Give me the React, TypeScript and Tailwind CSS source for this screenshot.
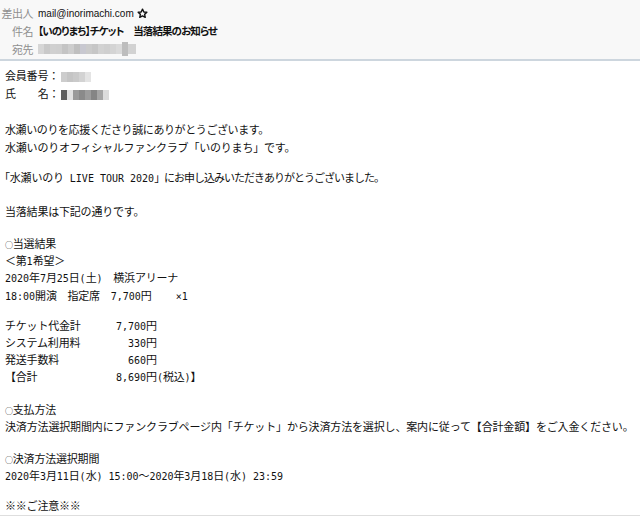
import React from 'react';

const M: React.FC<{ children: React.ReactNode }> = ({ children }) => (
  <span className="font-['DejaVu_Sans_Mono','Liberation_Mono',monospace] text-[10px] tracking-normal whitespace-pre">{children}</span>
);

const Line: React.FC<{ className?: string; children?: React.ReactNode }> = ({ className = '', children }) => (
  <div className={`h-[17px] leading-[17px] whitespace-nowrap ${className}`}>{children}</div>
);

const Mosaic: React.FC<{ cells: string[]; className?: string }> = ({ cells, className = '' }) => (
  <span className={`inline-flex align-middle ${className}`}>
    {cells.map((c, i) => (
      <span key={i} className="inline-block w-[6px] h-[10px]" style={{ backgroundColor: c }} />
    ))}
  </span>
);

const HeaderRow: React.FC<{ label: string; children: React.ReactNode }> = ({ label, children }) => (
  <div className="flex items-center h-[18px]">
    <div className="w-[33px] text-right text-[11px] text-[#8f8f8f] tracking-[-0.5px]">{label}</div>
    <div className="pl-[5px] flex items-center">{children}</div>
  </div>
);

export default function App() {
  return (
    <div className="w-[640px] h-[516px] overflow-hidden bg-white font-['Noto_Sans_CJK_JP','Noto_Sans',sans-serif] text-[#111] border-b border-[#dedede]">
      <div className="bg-[#f8f8f8] pt-[4px] h-[61px] border-b-2 border-[#cdd6de]">
        <HeaderRow label="差出人">
          <span className="text-[10px] font-['Liberation_Sans',sans-serif] text-[#111]">mail@inorimachi.com</span>
          <svg className="ml-[3px]" width="11" height="11" viewBox="0 0 24 24" fill="none" stroke="#111" strokeWidth="3" strokeLinejoin="round">
            <path d="M12 2.5l2.9 6.2 6.6.7-4.9 4.5 1.4 6.6L12 17.2l-6 3.3 1.4-6.6-4.9-4.5 6.6-.7z" />
          </svg>
        </HeaderRow>
        <HeaderRow label="件名">
          <span className="text-[10.5px] font-bold tracking-[-0.9px] [font-feature-settings:'palt'] text-[#111]">【いのりまち】チケット　当落結果のお知らせ</span>
        </HeaderRow>
        <HeaderRow label="宛先">
          <span className="inline-flex items-center">
            <Mosaic cells={['#d6d6d6', '#c9c9c9', '#d0d0d0', '#cfcfcf', '#c4c4c4', '#cdcdcd', '#bfbfbf', '#c8c8d0', '#cbcbcb', '#c6c6c6', '#d2d2d2', '#cfcfcf', '#d4d4d4', '#dadada']} />
            <span className="inline-block w-[6px] h-[14px] bg-[#bdbdbd]" />
            <span className="inline-block w-[8px] h-[10px] bg-[#d2d2d2]" />
          </span>
        </HeaderRow>
      </div>

      <div className="pt-[6px] px-[5px] text-[11px] tracking-[-0.2px]">
        <Line>
          会員番号：<Mosaic className="ml-[2px]" cells={['#cdcdcd', '#c5c5c5', '#cacaca', '#d3d3d3', '#e4e4e4']} />
        </Line>
        <Line className="mt-[1px]">
          氏<span className="inline-block w-[22px]" />名：<Mosaic className="ml-[2px]" cells={['#5f5f5f', '#e2e2e2', '#9a9a9a', '#8a8a8a', '#9c9c9c', '#858585', '#a5a5a5', '#dcdcdc']} />
        </Line>
        <Line className="mt-[19px] tracking-[-0.4px]">水瀬いのりを応援くださり誠にありがとうございます。</Line>
        <Line className="mt-[1px]">水瀬いのりオフィシャルファンクラブ「いのりまち」です。</Line>
        <Line className="mt-[13px]">
          <span className="ml-[-6px]">「</span>水瀬いのり<M> LIVE TOUR 2020</M>
          <span className="tracking-[-1px]">」にお申し込みいただきありがとうございました。</span>
        </Line>
        <Line className="mt-[17px]">当落結果は下記の通りです。</Line>
        <Line className="mt-[15px]">
          <span className="text-[8px]">○</span>当選結果
        </Line>
        <Line>＜第<M>1</M>希望＞</Line>
        <Line>
          <M>2020</M>年<M>7</M>月<M>25</M>日<M>(</M>土<M>)</M>　横浜アリーナ
        </Line>
        <Line className="mt-[1px]">
          <M>18:00</M>開演　指定席　<M>7,700</M>円<M>    ×1</M>
        </Line>
        <Line className="mt-[13px]">
          <span className="inline-block w-[111px]">チケット代金計</span>
          <M>7,700</M>円
        </Line>
        <Line>
          <span className="inline-block w-[111px]">システム利用料</span>
          <M>  330</M>円
        </Line>
        <Line>
          <span className="inline-block w-[111px]">発送手数料</span>
          <M>  660</M>円
        </Line>
        <Line>
          <span className="inline-block w-[111px]">【合計</span>
          <M>8,690</M>円<M>(</M>税込<M>)</M>】
        </Line>
        <Line className="mt-[16px]">
          <span className="text-[8px]">○</span>支払方法
        </Line>
        <Line className="tracking-[-0.15px]">決済方法選択期間内にファンクラブページ内「チケット」から決済方法を選択し、案内に従って【合計金額】をご入金ください。</Line>
        <Line className="mt-[15px]">
          <span className="text-[8px]">○</span>決済方法選択期間
        </Line>
        <Line>
          <M>2020</M>年<M>3</M>月<M>11</M>日<M>(</M>水<M>) 15:00</M>～<M>2020</M>年<M>3</M>月<M>18</M>日<M>(</M>水<M>) 23:59</M>
        </Line>
        <Line className="mt-[13px]">※※ご注意※※</Line>
      </div>
    </div>
  );
}
